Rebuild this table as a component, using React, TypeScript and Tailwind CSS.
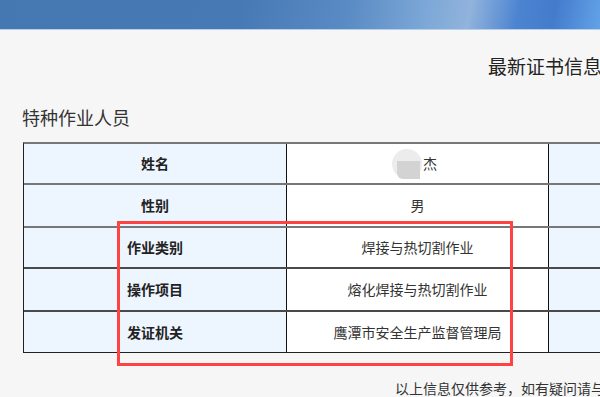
const rows = [
  { label: "姓名", value: null as string | null, h: "h-[41px]" },
  { label: "性别", value: "男", h: "h-[43px]" },
  { label: "作业类别", value: "焊接与热切割作业", h: "h-[41px]" },
  { label: "操作项目", value: "熔化焊接与热切割作业", h: "h-[43px]" },
  { label: "发证机关", value: "鹰潭市安全生产监督管理局", h: "h-[40px]" },
];

function BlurredName() {
  return (
    <div className="flex items-center">
      <div className="relative w-[30px] h-[30px] rounded-full bg-[#ececec] ml-[-6px]">
        <div className="absolute left-[5px] top-[12px] w-[23px] h-[18px] rounded-bl-[6px] bg-[#d3d3d3]" />
      </div>
      <span className="ml-[1px]">杰</span>
    </div>
  );
}

export default function App() {
  return (
    <div
      className="relative w-[600px] h-[397px] overflow-hidden bg-[#f6f6f6] text-[#222]"
      style={{ fontFamily: '"Noto Sans CJK SC", "Noto Sans", sans-serif' }}
    >
      {/* top banner */}
      <div className="h-[29px] bg-[linear-gradient(100deg,#4577b1_0%,#4779b4_40%,#5a8bc4_58%,#7aa6d6_70%,#91b3dc_78%,#4c84d1_86%,#447ccc_92%,#62a2e7_100%)]" />
      <div className="h-[1px] bg-[#b9cfe9]" />

      <div className="mt-[24px] h-[24px] leading-[24px] pl-[488px] text-[19px] text-[#222] whitespace-nowrap">
        最新证书信息
      </div>

      <div className="mt-[27px] h-[24px] leading-[24px] pl-[22px] text-[18px] text-[#333]">
        特种作业人员
      </div>

      {/* certificate table */}
      <div className="mt-[13px] ml-[23px] w-[620px] border-l border-l-[#222] border-t-2 border-t-[#777] border-b border-b-[#222]">
        {rows.map((r, i) => (
          <div
            key={r.label}
            className={`grid grid-cols-[263px_262px_95px] ${r.h} ${
              i < 2 ? "border-b-2 border-b-[#777]" : i < 4 ? "border-b-2 border-b-[#4a4a4a]" : ""
            }`}
          >
            <div className="bg-[#edf5fe] flex items-center justify-center text-[14px] font-bold text-[#222] border-r border-r-[#111]">
              {r.label}
            </div>
            <div className="bg-white flex items-center justify-center text-[14px] text-[#333] border-r border-r-[#111]">
              {r.value === null ? <BlurredName /> : r.value}
            </div>
            <div className="bg-[#edf5fe]" />
          </div>
        ))}
      </div>

      <div className="mt-[23px] h-[24px] leading-[24px] pl-[395px] text-[14px] text-[#333] whitespace-nowrap">
        以上信息仅供参考，如有疑问请与
      </div>

      {/* highlight box */}
      <div className="absolute left-[117px] top-[221px] w-[396px] h-[145px] border-[3px] border-[#ff4242]" />
    </div>
  );
}
